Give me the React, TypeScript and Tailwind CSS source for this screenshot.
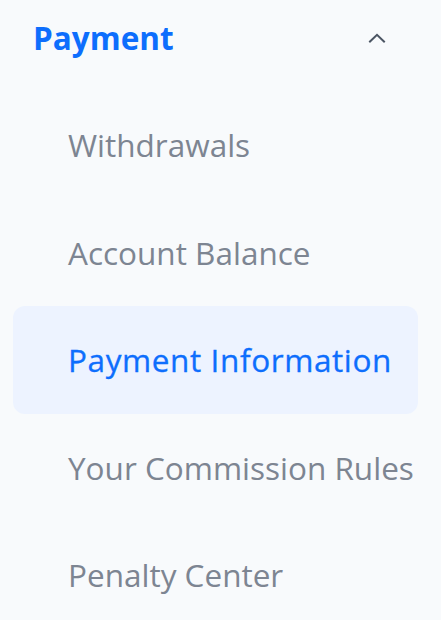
import React from 'react';

const items = ['Withdrawals', 'Account Balance', 'Payment Information', 'Your Commission Rules', 'Penalty Center'];

const ChevronUp: React.FC = () => (
  <svg width="18" height="10" viewBox="0 0 18 10" fill="none" stroke="#4b5563" strokeWidth="2" strokeLinecap="square" strokeLinejoin="miter">
    <path d="M2 8.5L9 1.8l7 6.7" />
  </svg>
);

export default function App() {
  const active = 'Payment Information';
  return (
    <div className="w-[441px] h-[620px] overflow-hidden bg-[#f8fafc]" style={{ fontFamily: '"Open Sans", "Noto Sans", sans-serif' }}>
      <div className="flex items-center justify-between h-[76px] pl-[33px] pr-[55px]">
        <span className="text-[31.5px] font-bold text-[#0d6efd]">Payment</span>
        <ChevronUp />
      </div>
      <ul className="mt-[15px] pl-[13px] pr-[23px]">
        {items.map((item) => (
          <li
            key={item}
            className={`flex items-center h-[107.5px] pl-[55px] rounded-xl whitespace-nowrap text-[31.5px] ${
              item === active ? 'bg-[#edf3ff] text-[#0d6efd] tracking-[0.6px] [-webkit-text-stroke:0.3px_#0d6efd]' : 'text-[#7d8592]'
            }`}
          >
            {item}
          </li>
        ))}
      </ul>
    </div>
  );
}
